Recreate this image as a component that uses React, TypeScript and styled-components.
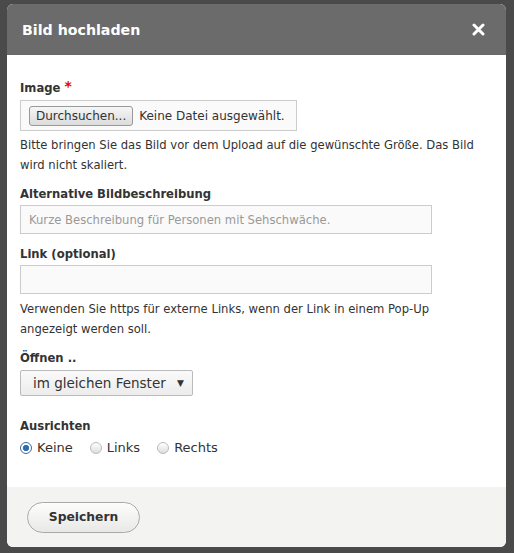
import React from 'react';
import styled, { createGlobalStyle } from 'styled-components';

const GlobalStyle = createGlobalStyle`
  html, body {
    margin: 0;
    padding: 0;
    background: #4a4a4a;
    font-family: "DejaVu Sans", Verdana, sans-serif;
  }
`;

const Backdrop = styled.div`
  width: 514px;
  height: 553px;
  padding: 4px 8px 6px 7px;
  box-sizing: border-box;
`;

const Dialog = styled.div`
  width: 499px;
  height: 543px;
  background: #fff;
  border-radius: 6px;
  overflow: hidden;
  display: flex;
  flex-direction: column;
`;

const TitleBar = styled.div`
  height: 51px;
  flex-shrink: 0;
  background: #6b6b6b;
  display: flex;
  align-items: center;
  justify-content: space-between;
  padding: 0 21px 0 15px;
  color: #fff;
`;

const Title = styled.h1`
  margin: 0;
  font-size: 14.2px;
  font-weight: bold;
`;

const Body = styled.div`
  flex: 1;
  padding: 24px 13px 0;
`;

const Field = styled.div<{ $gap?: number }>`
  margin-bottom: ${(p) => p.$gap ?? 12}px;
`;

const Label = styled.label<{ $space?: number }>`
  display: block;
  font-size: 11.6px;
  line-height: 15px;
  height: 15px;
  font-weight: bold;
  color: #333;
  margin-bottom: ${(p) => p.$space ?? 3}px;
`;

const Star = styled.span`
  color: #e00;
  font-size: 14px;
  vertical-align: 1px;
`;

const FileBox = styled.div`
  width: 277px;
  height: 31px;
  box-sizing: border-box;
  border: 1px solid #ccc;
  background: #fafafa;
  display: flex;
  align-items: center;
  padding: 0 8px;
  gap: 6px;
  font-size: 12px;
  color: #333;
  white-space: nowrap;
`;

const FileButton = styled.span`
  border: 1px solid #999;
  border-radius: 3px;
  background: linear-gradient(#f6f6f6, #dcdcdc);
  padding: 2px 6px;
  font-size: 12px;
`;

const Help = styled.p<{ $top?: number }>`
  margin: ${(p) => p.$top ?? 4}px 0 0;
  font-size: 11.6px;
  line-height: 20px;
  color: #333;
`;

const TextInput = styled.input`
  display: block;
  width: 412px;
  height: 29px;
  box-sizing: border-box;
  border: 1px solid #ccc;
  background: #fafafa;
  padding: 0 8px;
  font-family: inherit;
  font-size: 11.6px;
  color: #333;
  &::placeholder {
    color: #999;
  }
`;

const Select = styled.div`
  width: 173px;
  height: 26px;
  box-sizing: border-box;
  border: 1px solid #bbb;
  border-radius: 2px;
  background: linear-gradient(#fafafa, #ececec);
  display: flex;
  align-items: center;
  justify-content: space-between;
  padding: 0 8px 0 12px;
  font-size: 13.5px;
  color: #333;
`;

const Caret = styled.span`
  font-size: 9px;
`;

const Radios = styled.div`
  display: flex;
  align-items: center;
  gap: 17px;
  font-size: 13px;
  line-height: 15px;
  color: #333;
`;

const RadioItem = styled.span`
  display: flex;
  align-items: center;
  gap: 5px;
`;

const Dot = styled.span<{ $on?: boolean }>`
  width: 10px;
  height: 10px;
  border-radius: 50%;
  border: 1px solid ${(p) => (p.$on ? '#3a6aa0' : '#bbb')};
  background: ${(p) =>
    p.$on
      ? 'radial-gradient(circle, #2a6fb0 0 2.8px, #fff 3.4px)'
      : 'linear-gradient(#fff, #ddd)'};
`;

const Footer = styled.div`
  height: 60px;
  flex-shrink: 0;
  background: #f3f3f2;
  display: flex;
  align-items: center;
  padding: 0 20px;
`;

const SaveButton = styled.button`
  width: 113px;
  height: 31px;
  border: 1px solid #aaa;
  border-radius: 16px;
  background: linear-gradient(#fdfdfd, #e8e8e6);
  font-family: inherit;
  font-weight: bold;
  font-size: 12.3px;
  color: #333;
`;

const CloseIcon = () => (
  <svg width="13" height="13" viewBox="0 0 13 13">
    <path d="M2 2 L11 11 M11 2 L2 11" stroke="#fff" strokeWidth="3" strokeLinecap="round" />
  </svg>
);

const App = () => (
  <>
    <GlobalStyle />
    <Backdrop>
      <Dialog>
        <TitleBar>
          <Title>Bild hochladen</Title>
          <CloseIcon />
        </TitleBar>
        <Body>
          <Field>
            <Label $space={6}>
              Image <Star>*</Star>
            </Label>
            <FileBox>
              <FileButton>Durchsuchen...</FileButton>
              Keine Datei ausgewählt.
            </FileBox>
            <Help>
              Bitte bringen Sie das Bild vor dem Upload auf die gewünschte Größe. Das Bild
              <br />
              wird nicht skaliert.
            </Help>
          </Field>
          <Field $gap={13}>
            <Label>Alternative Bildbeschreibung</Label>
            <TextInput placeholder="Kurze Beschreibung für Personen mit Sehschwäche." />
          </Field>
          <Field>
            <Label>Link (optional)</Label>
            <TextInput />
            <Help $top={5}>
              Verwenden Sie https für externe Links, wenn der Link in einem Pop-Up
              <br />
              angezeigt werden soll.
            </Help>
          </Field>
          <Field $gap={23}>
            <Label $space={4}>Öffnen ..</Label>
            <Select>
              im gleichen Fenster <Caret>▼</Caret>
            </Select>
          </Field>
          <Field>
            <Label $space={6}>Ausrichten</Label>
            <Radios>
              <RadioItem>
                <Dot $on /> Keine
              </RadioItem>
              <RadioItem>
                <Dot /> Links
              </RadioItem>
              <RadioItem>
                <Dot /> Rechts
              </RadioItem>
            </Radios>
          </Field>
        </Body>
        <Footer>
          <SaveButton>Speichern</SaveButton>
        </Footer>
      </Dialog>
    </Backdrop>
  </>
);

export default App;
